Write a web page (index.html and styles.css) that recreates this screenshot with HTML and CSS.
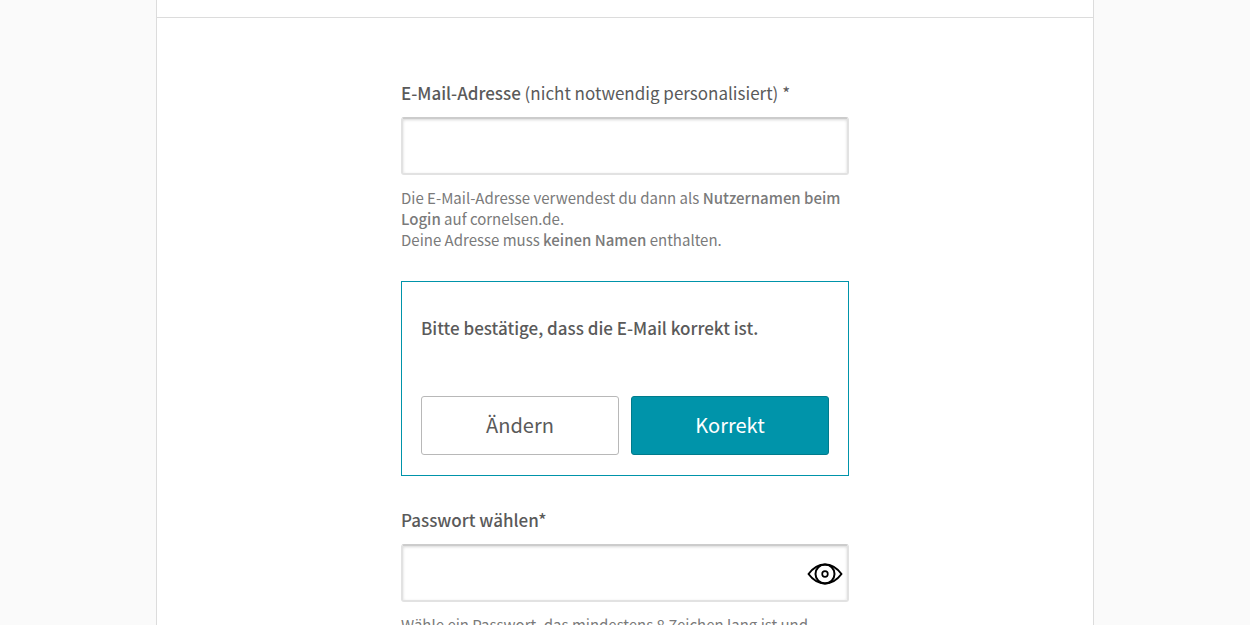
FILE: index.html
```
<!DOCTYPE html>
<html lang="de">
<head>
    <meta charset="UTF-8">
    <meta name="viewport" content="width=device-width, initial-scale=1.0">
    <title>Registrierung</title>
    <link rel="stylesheet" href="styles.css">
</head>
<body>
    <main class="page">
        <div class="page-head"></div>
        <form class="register">
            <div class="field">
                <label for="email"><strong>E-Mail-Adresse</strong> (nicht notwendig personalisiert) *</label>
                <input type="email" id="email" class="text-input" required>
                <p class="hint">Die E-Mail-Adresse verwendest du dann als <strong>Nutzernamen beim Login</strong> auf cornelsen.de.<br>Deine Adresse muss <strong>keinen Namen</strong> enthalten.</p>
            </div>

            <section class="confirm">
                <p class="confirm-title">Bitte bestätige, dass die E-Mail korrekt ist.</p>
                <div class="confirm-buttons">
                    <button type="button" class="btn">Ändern</button>
                    <button type="button" class="btn btn-primary">Korrekt</button>
                </div>
            </section>

            <div class="field">
                <label for="password"><strong>Passwort wählen*</strong></label>
                <div class="password">
                    <input type="password" id="password" class="text-input" required>
                    <button type="button" class="toggle" aria-label="Passwort anzeigen">
                        <svg width="36" height="24" viewBox="0 0 36 24" fill="none" stroke="#000" stroke-width="2" stroke-linejoin="round">
                            <path d="M1.500 12C6 6 11.500 2.500 18 2.500S30 6 34.500 12C30 18 24.500 21.500 18 21.500S6 18 1.500 12z"/>
                            <circle cx="18" cy="12" r="9.500"/>
                            <circle cx="18" cy="12" r="2.800" stroke-width="1.700"/>
                        </svg>
                    </button>
                </div>
                <p class="hint">Wähle ein Passwort, das mindestens 8 Zeichen lang ist und</p>
            </div>
        </form>
    </main>
</body>
</html>
```
FILE: styles.css
```
* {
    box-sizing: border-box;
}
body {
    margin: 0;
    height: 100vh;
    overflow: hidden;
    background-color: #fafafa;
    color: #5a5a5a;
    font-family: "Noto Sans CJK SC", "Noto Sans", sans-serif;
    font-size: 17px;
    line-height: 24px;
}
p {
    margin: 0;
}
strong {
    font-weight: 500;
}
.page {
    width: 75%;
    min-height: 100%;
    margin: 0 auto;
    background-color: #fff;
    border: 1px solid #dcdcdc;
    border-width: 0 1px;
}
.page-head {
    height: 18px;
    border-bottom: 1px solid #dcdcdc;
}
.register {
    max-width: 448px;
    margin: 0 auto;
    padding-top: 63px;
}
.field label {
    display: block;
    margin-bottom: 12px;
}
.text-input {
    display: block;
    width: 100%;
    height: 58px;
    padding: 0 16px;
    border: 2px solid #e2e2e2;
    border-top-color: #cccccc;
    border-radius: 3px;
    background-color: #fff;
    box-shadow: inset 0 1px 3px rgba(0, 0, 0, 0.16);
    color: inherit;
    font: inherit;
}
.hint {
    margin-top: 12px;
    color: #7a7a7a;
    font-size: 15px;
    line-height: 21px;
}
.confirm {
    margin: 31px 0 32px;
    padding: 34px 19px 20px;
    border: 1px solid #0094aa;
}
.confirm-title {
    margin-bottom: 56px;
    font-weight: 500;
}
.confirm-buttons {
    display: flex;
    gap: 12px;
}
.btn {
    flex: 1;
    height: 59px;
    padding: 0 8px 2px;
    border: 1px solid #b8b8b8;
    border-radius: 3px;
    background-color: #fff;
    color: #5a5a5a;
    font-family: inherit;
    font-size: 20px;
    cursor: pointer;
}
.btn-primary {
    border-color: #007b8c;
    background-color: #0094aa;
    color: #fff;
}
.password {
    position: relative;
}
/* eye button over the right end of the input */
.toggle {
    position: absolute;
    top: 2px;
    right: 6px;
    bottom: 0;
    display: flex;
    align-items: center;
    padding: 0;
    border: 0;
    background: none;
    cursor: pointer;
}
```
